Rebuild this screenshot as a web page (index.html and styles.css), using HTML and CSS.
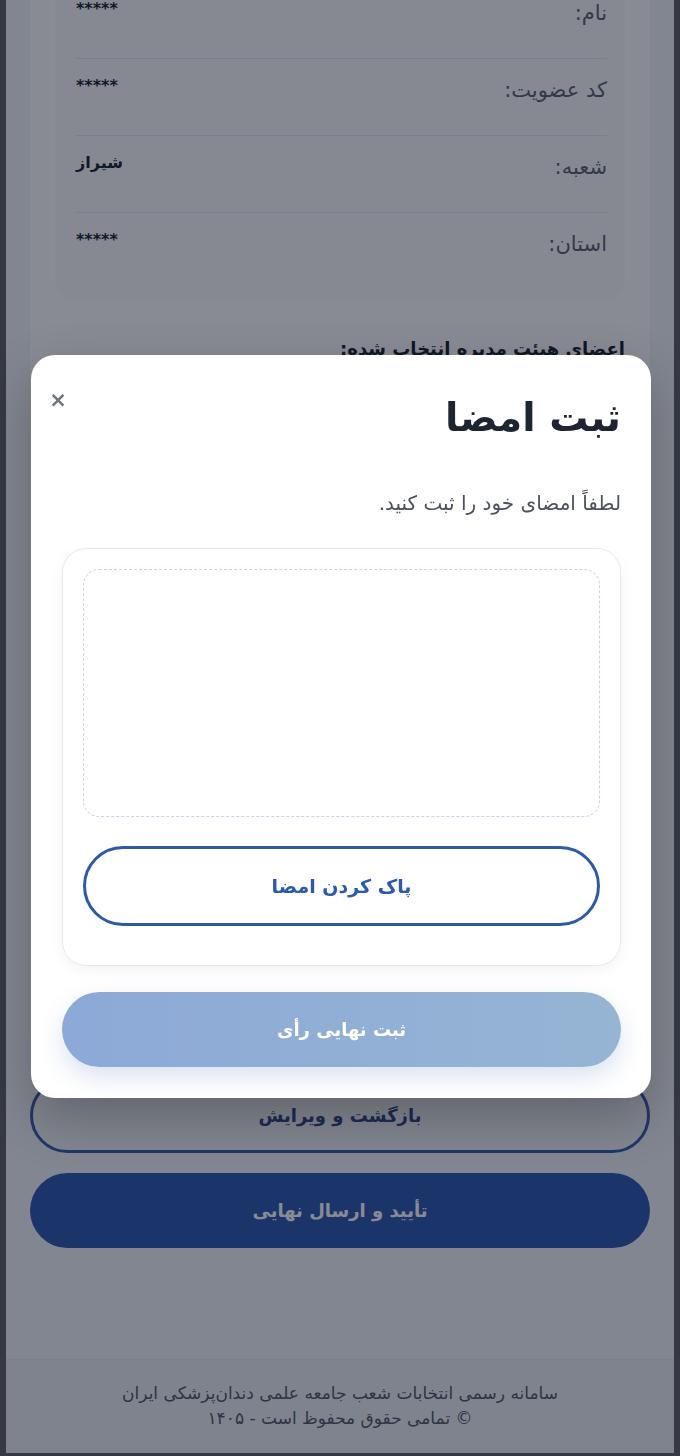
FILE: index.html
```html
<!DOCTYPE html>
<html lang="fa" dir="rtl">
<head>
<meta charset="utf-8">
<title>ثبت امضا</title>
<link rel="stylesheet" href="styles.css">
</head>
<body>
<div class="screen">
  <main class="page">
    <section class="card">
      <div class="info">
        <div class="info-row"><span class="label">نام:</span><span class="value">*****</span></div>
        <div class="info-row"><span class="label">کد عضویت:</span><span class="value">*****</span></div>
        <div class="info-row"><span class="label">شعبه:</span><span class="value">شیراز</span></div>
        <div class="info-row"><span class="label">استان:</span><span class="value">*****</span></div>
      </div>
      <h3 class="members-title">اعضای هیئت مدیره انتخاب شده:</h3>
      <div class="members"></div>
    </section>
    <div class="actions">
      <button class="btn btn-outline" type="button">بازگشت و ویرایش</button>
      <button class="btn btn-primary" type="button">تأیید و ارسال نهایی</button>
    </div>
  </main>
  <footer class="footer">
    <p>سامانه رسمی انتخابات شعب جامعه علمی دندان‌پزشکی ایران</p>
    <p>© تمامی حقوق محفوظ است - ۱۴۰۵</p>
  </footer>
</div>
<div class="overlay">
  <div class="modal">
    <button class="close" type="button" aria-label="بستن">×</button>
    <h2 class="modal-title">ثبت امضا</h2>
    <p class="modal-text">لطفاً امضای خود را ثبت کنید.</p>
    <div class="sign-card">
      <div class="sign-pad"></div>
      <button class="btn btn-clear" type="button">پاک کردن امضا</button>
    </div>
    <button class="btn btn-submit" type="button" disabled>ثبت نهایی رأی</button>
  </div>
</div>
</body>
</html>
```

FILE: styles.css
```css
* { box-sizing: border-box; }

html, body {
  margin: 0;
  padding: 0;
}

body {
  background: #5a5b5e;
  font-family: "DejaVu Sans", sans-serif;
  color: #111827;
  height: 1456px;
  overflow: hidden;
}

.screen {
  margin: 0 6px;
  height: 1453px;
  background: #f3f5f8;
  display: flex;
  flex-direction: column;
  overflow: hidden;
}

.page {
  flex: 1;
  padding: 0 24px 109px;
}

.card {
  margin-top: -43px;
  background: #ffffff;
  border-radius: 24px;
  padding: 25px;
}

.info {
  background: #fafbfc;
  border-radius: 16px;
  padding: 0 18px 10px 21px;
}

.info-row {
  display: flex;
  justify-content: space-between;
  align-items: flex-start;
  padding: 16px 0 30px;
  border-bottom: 1px solid #e3e6ea;
}

.info-row:last-child {
  border-bottom: none;
}

.label {
  font-size: 21px;
  line-height: 30px;
  color: #555b68;
}

.value {
  font-size: 16px;
  line-height: 22px;
  font-weight: 700;
  color: #111827;
}

.members-title {
  margin: 36px 0 0;
  font-size: 18px;
  line-height: 28px;
  font-weight: 700;
  color: #111827;
}

.members {
  margin-top: 16px;
  height: 654px;
}

.actions {
  margin-top: 20px;
  display: flex;
  flex-direction: column;
  gap: 20px;
}

.btn {
  display: flex;
  align-items: center;
  justify-content: center;
  width: 100%;
  height: 75px;
  border-radius: 40px;
  font-family: inherit;
  font-size: 18px;
  font-weight: 700;
  cursor: pointer;
}

.btn-outline {
  background: transparent;
  border: 3px solid #2c5aa8;
  color: #2a3f80;
}

.btn-primary {
  border: none;
  color: #ffffff;
  background: #2452ad;
}

.footer {
  background: #eceef3;
  border-top: 1px solid #e4e6eb;
  padding: 21px 16px 22px;
  text-align: center;
  color: #4b5060;
  font-size: 17px;
  line-height: 25px;
}

.footer p {
  margin: 0;
}

/* modal */
.overlay {
  position: fixed;
  inset: 0;
  background: rgba(17, 24, 39, 0.5);
  display: flex;
  align-items: center;
  justify-content: center;
}

.modal {
  position: relative;
  width: 620px;
  margin: 0 0 4px 2px;
  background: #ffffff;
  border-radius: 24px;
  padding: 35px 30px 31px 31px;
  box-shadow: 0 20px 50px rgba(0, 0, 0, 0.25);
}

.close {
  position: absolute;
  top: 33px;
  left: 15px;
  width: 24px;
  height: 24px;
  padding: 0;
  border: none;
  background: none;
  color: #6b7280;
  font-family: inherit;
  font-size: 21px;
  font-weight: 700;
  line-height: 24px;
  cursor: pointer;
}

.modal-title {
  margin: 0;
  font-size: 39px;
  line-height: 56px;
  font-weight: 700;
  color: #1f2433;
}

.modal-text {
  margin: 42px 0 0;
  font-size: 20px;
  line-height: 30px;
  color: #4b5160;
}

.sign-card {
  margin-top: 30px;
  border: 1px solid #e6e8ec;
  border-radius: 24px;
  padding: 20px 20px 39px;
  box-shadow: 0 4px 14px rgba(17, 24, 39, 0.05);
}

.sign-pad {
  height: 248px;
  border: 1px dashed #cdd0f0;
  border-radius: 16px;
  background: #ffffff;
}

.btn-clear {
  margin-top: 29px;
  height: 80px;
  background: #ffffff;
  border: 3px solid #2c5aa8;
  color: #2c59a8;
  font-size: 19px;
}

.btn-submit {
  margin-top: 26px;
  border: none;
  color: #ffffff;
  background: linear-gradient(90deg, #1d55b1, #2f6da9);
  opacity: 0.5;
  box-shadow: 0 10px 24px rgba(44, 90, 168, 0.35);
  cursor: not-allowed;
}
```
